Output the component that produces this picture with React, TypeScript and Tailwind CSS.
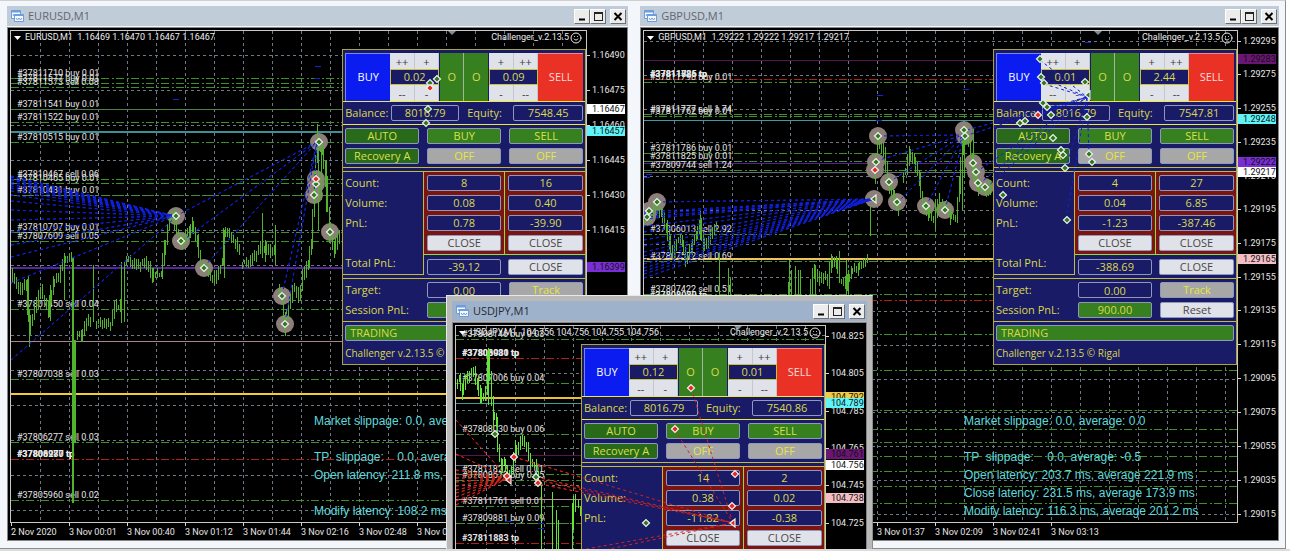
import React from 'react'
import { Smile } from 'lucide-react'

type Point = [number, number]

type Level = { y: number, color: string, width?: number }
type Order = { y: number, label?: string, tp?: boolean }
type Tag = { y: number, text: string, bg: string }
type Mark = { x: number, y: number, red?: boolean, halo?: boolean, tri?: boolean }
type Trend = { from: Point, to: Point }

type ChartData = {
  symbol: string
  quotes: string
  // desktop position of the plot's top left corner
  origin: Point
  grid: { x: number, y: number, stepY: number }
  barColor: string
  trendColor: string
  prices: Point[][]
  spikes: [number, number, number][]
  levels: Level[]
  orders: Order[]
  trends: Trend[]
  marks: Mark[]
  ticks: Point[]
  axis: { y: number, text: string }[]
  tags: Tag[]
  times: { x: number, text: string }[]
  notes: { x: number, y: number, text: string }[]
  shift: number
}

type PanelData = {
  buyLot: string
  sellLot: string
  balance: string
  equity: string
  count: [string, string]
  volume: [string, string]
  pnl: [string, string]
  total: string
  target: string
  session: string
}

const fan = (to: Point, x: number, ys: number[]): Trend[] => ys.map(y => ({ from: [x, y], to }))
const rays = (to: Point, from: Point[]): Trend[] => from.map(p => ({ from: p, to }))

const eurusd: ChartData = {
  symbol: 'EURUSD,M1',
  quotes: '1.16469 1.16470 1.16467 1.16467',
  origin: [11, 31],
  grid: { x: 40, y: 55, stepY: 35 },
  barColor: '#52b32d',
  trendColor: '#0f20dc',
  prices: [
    [[12, 268], [16, 282], [22, 290], [27, 284], [30, 328], [36, 308], [42, 290], [49, 310], [54, 285], [60, 276], [65, 259], [72, 258]],
    [[77, 331], [82, 336], [86, 326], [90, 320], [92, 321]],
    [[96, 321], [112, 325], [116, 305], [121, 306]],
    [[126, 256], [132, 262], [140, 266], [148, 262], [153, 275], [162, 274], [165, 252], [170, 222], [174, 214], [178, 232], [183, 243], [190, 232], [193, 226], [198, 240], [202, 262], [210, 275], [218, 277], [223, 262], [225, 232], [233, 236], [240, 246]],
    [[242, 262], [250, 262], [258, 254], [262, 246], [270, 250], [276, 252]],
    [[279, 284], [283, 298], [286, 322], [290, 306], [294, 288], [300, 296], [304, 275], [309, 265], [312, 246], [315, 195], [318, 142], [323, 152], [327, 180], [330, 225], [335, 250], [341, 234]],
  ],
  spikes: [[64, 255, 300], [72, 258, 503], [73, 258, 503], [74, 340, 443], [75, 340, 443], [93, 265, 322], [121, 262, 323], [124, 262, 322], [262, 213, 258], [265, 240, 262], [275, 225, 265], [224, 230, 278], [318, 142, 230], [321, 150, 200], [326, 160, 212], [50, 285, 321], [28, 276, 322]],
  levels: [
    { y: 109, color: '#666c78' },
    { y: 131, color: '#3c9092', width: 2 },
    { y: 267, color: '#55279a', width: 2 },
    { y: 341, color: '#a9868c' },
    { y: 393, color: '#f3cb35', width: 2 },
  ],
  orders: [
    { y: 78, label: '#37811710 buy 0.01' },
    { y: 83, label: '#37811577 buy 0.01' },
    { y: 87, label: '#37811573 sell 0.08' },
    { y: 109, label: '#37811541 buy 0.01' },
    { y: 122, label: '#37811522 buy 0.01' },
    { y: 142, label: '#37810515 buy 0.01' },
    { y: 179, label: '#37810467 sell 0.06' },
    { y: 183, label: '#37810465 buy 0.01' },
    { y: 195, label: '#37810431 buy 0.01' },
    { y: 232, label: '#37810707 buy 0.01' },
    { y: 241, label: '#37807609 sell 0.05' },
    { y: 309, label: '#37807450 sell 0.04' },
    { y: 379, label: '#37807038 sell 0.03' },
    { y: 442, label: '#37806277 sell 0.03' },
    { y: 459, label: '#37808980 tp', tp: true },
    { y: 459, label: '#37806277 tp', tp: true },
    { y: 500, label: '#37805960 sell 0.02' },
  ],
  trends: [
    ...fan([175, 216], 11, [176, 177, 179, 180, 182, 184, 186, 188, 191, 195, 201, 210, 220, 232, 245, 257, 283]),
    { from: [11, 360], to: [175, 218] },
    ...rays([317, 142], [[176, 216], [182, 241], [204, 267], [282, 295], [285, 323], [314, 195]]),
  ],
  marks: [
    { x: 176, y: 216, halo: true }, { x: 181, y: 241, halo: true }, { x: 204, y: 268, halo: true },
    { x: 282, y: 296, halo: true }, { x: 285, y: 324, halo: true }, { x: 319, y: 142, halo: true },
    { x: 316, y: 184, halo: true }, { x: 316, y: 179, halo: true, red: true }, { x: 314, y: 195, halo: true },
    { x: 330, y: 232, halo: true },
    { x: 437, y: 79 }, { x: 430, y: 83 }, { x: 430, y: 88, red: true }, { x: 428, y: 109 }, { x: 426, y: 123 },
  ],
  ticks: [[176, 99], [318, 66], [317, 78]],
  axis: [
    { y: 55, text: '1.16490' }, { y: 90, text: '1.16475' }, { y: 125, text: '1.16460' }, { y: 160, text: '1.16445' },
    { y: 195, text: '1.16430' }, { y: 230, text: '1.16415' },
  ],
  tags: [
    { y: 109, text: '1.16467', bg: '#ffffff' },
    { y: 131, text: '1.16457', bg: '#5ff5f8' },
    { y: 267, text: '1.16399', bg: '#7a2fd6' },
  ],
  times: [
    { x: 11, text: '2 Nov 2020' }, { x: 69, text: '3 Nov 00:01' }, { x: 127, text: '3 Nov 00:40' }, { x: 185, text: '3 Nov 01:12' },
    { x: 243, text: '3 Nov 01:44' }, { x: 301, text: '3 Nov 02:16' }, { x: 359, text: '3 Nov 02:48' }, { x: 417, text: '3 Nov 03:20' },
  ],
  notes: [
    { x: 314, y: 425, text: 'Market slippage: 0.0, average: 0.0' },
    { x: 314, y: 461, text: 'TP  slippage:    0.0, average: 0.0' },
    { x: 314, y: 479, text: 'Open latency: 211.8 ms, average' },
    { x: 314, y: 515, text: 'Modify latency: 108.2 ms, average' },
  ],
  shift: 452,
}

const gbpusd: ChartData = {
  symbol: 'GBPUSD,M1',
  quotes: '1.29222 1.29222 1.29217 1.29217',
  origin: [645, 31],
  grid: { x: 675, y: 41, stepY: 33.75 },
  barColor: '#52b32d',
  trendColor: '#0f20dc',
  prices: [
    [[646, 218], [652, 216], [658, 204], [663, 214], [668, 226], [671, 240], [675, 256], [679, 240], [684, 240], [688, 262], [693, 248], [698, 236], [702, 222], [705, 246], [711, 240], [718, 226]],
    [[811, 284], [816, 272], [822, 280], [826, 276], [830, 282], [833, 262], [838, 262], [842, 280], [848, 284], [853, 272], [860, 268], [869, 259]],
    [[876, 168], [880, 140], [886, 152], [890, 182], [895, 196], [900, 208]],
    [[904, 176], [908, 170], [911, 154], [916, 160], [921, 178], [925, 205], [930, 212], [936, 220], [941, 202], [947, 206], [952, 216], [958, 218], [961, 190], [964, 150], [967, 134], [971, 144], [975, 166], [980, 188], [987, 190], [993, 186]],
  ],
  spikes: [[720, 252, 297], [729, 268, 297], [731, 278, 297], [789, 282, 297], [790, 260, 297], [792, 270, 297], [796, 266, 297], [799, 270, 297], [801, 270, 297], [811, 280, 297], [813, 268, 297], [816, 265, 297], [840, 251, 282], [847, 260, 297], [849, 270, 297], [871, 206, 236], [876, 163, 184], [701, 211, 240], [936, 200, 230], [963, 145, 210], [965, 138, 178], [974, 128, 180]],
  levels: [
    { y: 60, color: '#571358' },
    { y: 120, color: '#3f9c9e' },
    { y: 163, color: '#55208f' },
    { y: 172, color: '#666c78' },
    { y: 258, color: '#f1c15a', width: 2 },
  ],
  orders: [
    { y: 79, label: '#37811786 tp', tp: true },
    { y: 79, label: '#37811825 tp', tp: true },
    { y: 82, label: '#37811798 buy 0.01' },
    { y: 114, label: '#37811777 sell 1.74' },
    { y: 116, label: '#37811762 buy 0.01' },
    { y: 153, label: '#37811786 buy 0.01' },
    { y: 161, label: '#37811825 buy 0.01' },
    { y: 170, label: '#37809744 sell 1.24' },
    { y: 234, label: '#37806013 sell 2.92' },
    { y: 261, label: '#37807572 sell 0.69' },
    { y: 294, label: '#37807422 sell 0.51' },
    { y: 300, label: '#37808980 tp', tp: true },
    { y: 334 }, { y: 370 }, { y: 410 }, { y: 429 }, { y: 442 }, { y: 456 }, { y: 471 }, { y: 486 }, { y: 503 },
  ],
  trends: [
    ...fan([875, 199], 645, [212, 214, 217, 219, 226, 232, 240, 246, 252, 256, 260, 264, 268, 271, 274, 278]),
    { from: [658, 202], to: [875, 199] },
    ...rays([965, 135], [[879, 136], [877, 161], [890, 182], [898, 203], [927, 206], [946, 210]]),
    ...rays([1088, 97], [[966, 136], [968, 130], [977, 172], [980, 184], [987, 188], [1041, 60], [1043, 78], [1045, 84], [1021, 123], [1039, 115], [1067, 219], [1067, 168], [1090, 155]]),
  ],
  marks: [
    { x: 658, y: 202, halo: true }, { x: 650, y: 211, halo: true }, { x: 648, y: 217, halo: true },
    { x: 879, y: 136, halo: true }, { x: 877, y: 162, halo: true }, { x: 876, y: 170, halo: true, red: true },
    { x: 890, y: 182, halo: true }, { x: 875, y: 199, halo: true, tri: true }, { x: 898, y: 202, halo: true },
    { x: 927, y: 206, halo: true }, { x: 946, y: 210, halo: true }, { x: 965, y: 130, halo: true }, { x: 966, y: 136, halo: true },
    { x: 974, y: 163, halo: true }, { x: 977, y: 172, halo: true }, { x: 979, y: 183, halo: true }, { x: 986, y: 187, halo: true },
    { x: 1041, y: 59 }, { x: 1042, y: 77 }, { x: 1045, y: 83 }, { x: 1086, y: 82 }, { x: 1089, y: 95, tri: true },
    { x: 1044, y: 103 }, { x: 1048, y: 107 }, { x: 1039, y: 115, red: true }, { x: 1052, y: 115 }, { x: 1088, y: 117 },
    { x: 1021, y: 123 }, { x: 1026, y: 121 }, { x: 1054, y: 138 }, { x: 1062, y: 150 }, { x: 1064, y: 155 },
    { x: 1066, y: 168 }, { x: 1090, y: 154 }, { x: 1093, y: 162 }, { x: 1004, y: 195 }, { x: 1068, y: 220 },
  ],
  ticks: [[881, 95], [967, 89], [880, 120], [650, 174], [648, 177], [1089, 42]],
  axis: [
    { y: 41, text: '1.29295' }, { y: 74, text: '1.29275' }, { y: 108, text: '1.29255' }, { y: 142, text: '1.29235' }, { y: 176, text: '1.29215' },
    { y: 209, text: '1.29195' }, { y: 243, text: '1.29175' }, { y: 277, text: '1.29155' }, { y: 310, text: '1.29135' },
    { y: 344, text: '1.29115' }, { y: 378, text: '1.29095' }, { y: 412, text: '1.29075' }, { y: 446, text: '1.29055' },
    { y: 480, text: '1.29035' }, { y: 514, text: '1.29015' },
  ],
  tags: [
    { y: 59, text: '1.29283', bg: '#6b1674' },
    { y: 119, text: '1.29248', bg: '#5ff5f8' },
    { y: 162, text: '1.29222', bg: '#7a2fd6' },
    { y: 172, text: '1.29217', bg: '#ffffff' },
    { y: 259, text: '1.29165', bg: '#f3bfc4' },
  ],
  times: [
    { x: 878, text: '3 Nov 01:37' }, { x: 936, text: '3 Nov 02:09' }, { x: 994, text: '3 Nov 02:41' }, { x: 1052, text: '3 Nov 03:13' },
  ],
  notes: [
    { x: 965, y: 425, text: 'Market slippage: 0.0, average: 0.0' },
    { x: 965, y: 461, text: 'TP  slippage:    0.0, average: -0.5' },
    { x: 965, y: 479, text: 'Open latency: 203.7 ms, average 221.9 ms' },
    { x: 965, y: 497, text: 'Close latency: 231.5 ms, average 173.9 ms' },
    { x: 965, y: 515, text: 'Modify latency: 116.3 ms, average 201.2 ms' },
  ],
  shift: 1099,
}

const usdjpy: ChartData = {
  symbol: 'USDJPY,M1',
  quotes: '104.756 104.756 104.755 104.756',
  origin: [456, 326],
  grid: { x: 486, y: 335, stepY: 37.5 },
  barColor: '#62e636',
  trendColor: '#d3221c',
  prices: [
    [[457, 382], [460, 378], [463, 390], [467, 380], [471, 374], [475, 372], [478, 382], [481, 394], [485, 398], [487, 392], [489, 352], [491, 378], [494, 412], [497, 420], [499, 450], [502, 466], [505, 462], [509, 474], [513, 470], [516, 452], [520, 446], [524, 440], [528, 448], [532, 460], [536, 466], [540, 484]],
  ],
  spikes: [[488, 348, 405], [541, 485, 549], [552, 492, 549], [556, 510, 549], [558, 520, 549], [572, 503, 549], [573, 496, 530], [575, 494, 512], [578, 500, 508], [580, 506, 516]],
  levels: [
    { y: 397, color: '#e9bf3a', width: 2 },
    { y: 403, color: '#3f9c9e' },
    { y: 455, color: '#571358' },
    { y: 465, color: '#666c78' },
    { y: 499, color: '#b58d92' },
  ],
  orders: [
    { y: 339, label: '#37808146 buy 0.03' },
    { y: 358, label: '#37808981 tp', tp: true },
    { y: 358, label: '#37806030 tp', tp: true },
    { y: 383, label: '#37807006 buy 0.04' },
    { y: 434, label: '#37808030 buy 0.06' },
    { y: 474, label: '#37811827 sell 0.01' },
    { y: 480, label: '#37808513 buy 0.05' },
    { y: 506, label: '#37811761 sell 0.01' },
    { y: 523, label: '#37809881 buy 0.09' },
    { y: 543, label: '#37811883 tp', tp: true },
  ],
  trends: [
    ...fan([508, 478], 456, [420, 454, 470, 474, 478, 482, 486, 490, 493, 497, 501, 505]),
    ...rays([733, 523], [[514, 457], [538, 480], [536, 477], [456, 572], [500, 572], [691, 388], [675, 430], [540, 484]]),
  ],
  marks: [
    { x: 495, y: 434 }, { x: 514, y: 457, red: true }, { x: 507, y: 476, red: true }, { x: 509, y: 480, red: true, tri: true },
    { x: 536, y: 477 }, { x: 538, y: 483, red: true },
    { x: 691, y: 388, red: true }, { x: 675, y: 429, red: true }, { x: 735, y: 474, red: true }, { x: 732, y: 506, red: true },
    { x: 733, y: 523, red: true, tri: true }, { x: 646, y: 523 },
  ],
  ticks: [[508, 521], [541, 523], [541, 528]],
  axis: [
    { y: 336, text: '104.825' }, { y: 373, text: '104.805' }, { y: 411, text: '104.785' }, { y: 448, text: '104.765' },
    { y: 485, text: '104.745' }, { y: 523, text: '104.725' },
  ],
  tags: [
    { y: 397, text: '104.792', bg: '#f0cd45' },
    { y: 403, text: '104.789', bg: '#5ff5f8' },
    { y: 454, text: '104.761', bg: '#6b1674' },
    { y: 465, text: '104.756', bg: '#ffffff' },
    { y: 498, text: '104.738', bg: '#f3bfc4' },
  ],
  times: [],
  notes: [],
  shift: 738,
}

const eurPanel: PanelData = {
  buyLot: '0.02', sellLot: '0.09', balance: '8016.79', equity: '7548.45',
  count: ['8', '16'], volume: ['0.08', '0.40'], pnl: ['0.78', '-39.90'],
  total: '-39.12', target: '0.00', session: '900.00',
}
const gbpPanel: PanelData = {
  buyLot: '0.01', sellLot: '2.44', balance: '8016.79', equity: '7547.81',
  count: ['4', '27'], volume: ['0.04', '6.85'], pnl: ['-1.23', '-387.46'],
  total: '-388.69', target: '0.00', session: '900.00',
}
const jpyPanel: PanelData = {
  buyLot: '0.12', sellLot: '0.01', balance: '8016.79', equity: '7540.86',
  count: ['14', '2'], volume: ['0.38', '0.02'], pnl: ['-11.82', '-0.38'],
  total: '-12.20', target: '0.00', session: '900.00',
}

// turns a coarse price path into minute bars
function toBars(path: Point[]) {
  let seed = 7
  const rand = () => {
    seed = (seed * 16807) % 2147483647
    return seed / 2147483647
  }
  let d = ''
  for (let i = 0; i < path.length - 1; i++) {
    const [x0, y0] = path[i]
    const [x1, y1] = path[i + 1]
    for (let x = x0; x < x1; x += 2) {
      const a = y0 + ((y1 - y0) * (x - x0)) / (x1 - x0)
      const b = y0 + ((y1 - y0) * (x + 2 - x0)) / (x1 - x0)
      const top = Math.round(Math.min(a, b) - rand() * 7)
      const bottom = Math.round(Math.max(a, b) + 1 + rand() * 7)
      d += `M${x + 0.5} ${top}V${bottom}`
    }
  }
  return d
}

const Marker = ({ mark }: { mark: Mark }) => (
  <path
    transform={`translate(${mark.x} ${mark.y})`}
    d={mark.tri ? 'M-3 0L2 -4V4Z' : 'M-3.500 0L0 -3.500L3.500 0L0 3.500Z'}
    fill={mark.red ? '#e8281f' : '#2d7a1d'}
    stroke="#f1f1f1"
    strokeWidth="1.2"
  />
)

const TrendLines = ({ data }: { data: ChartData }) => (
  <g stroke={data.trendColor} strokeDasharray="3 3" fill="none">
    {data.trends.map((t, i) => (
      <path key={i} d={`M${t.from[0]} ${t.from[1]}L${t.to[0]} ${t.to[1]}`} />
    ))}
  </g>
)

const Plot = ({ data }: { data: ChartData }) => {
  const [ox, oy] = data.origin
  const columns = Array.from({ length: 22 }, (_, i) => data.grid.x + i * 29)
  const rows = Array.from({ length: 16 }, (_, i) => Math.round(data.grid.y + i * data.grid.stepY))

  return (
    <svg className="absolute inset-0 h-full w-full" aria-hidden="true">
      <g transform={`translate(${-ox} ${-oy})`}>
        <g stroke="#6d7986" strokeDasharray="3 3">
          {columns.map(x => <path key={x} d={`M${x + 0.5} ${oy}V${oy + 600}`} />)}
          {rows.map(y => <path key={y} d={`M${ox} ${y + 0.5}H${ox + 700}`} />)}
        </g>
        {data.levels.map(l => (
          <rect key={l.y} x={ox} y={l.y} width="700" height={l.width ?? 1} fill={l.color} />
        ))}
        {data.orders.map((o, i) => (
          <path key={i} d={`M${ox} ${o.y + 0.5}h700`} stroke={o.tp ? '#b3201a' : '#40902a'} strokeDasharray="8 3 2 2" />
        ))}
        <g fill="#e6e6e6">
          {data.orders.map((o, i) => (
            <text key={i} x={ox + 6} y={o.y - 2} fontWeight={o.tp ? 700 : 400}>{o.label}</text>
          ))}
        </g>
        <TrendLines data={data} />
        {data.marks.filter(m => m.halo).map((m, i) => (
          <circle key={i} cx={m.x} cy={m.y} r="9" fill="#8c7f79" />
        ))}
        <g stroke={data.barColor} fill="none">
          {data.prices.map((p, i) => <path key={i} d={toBars(p)} />)}
          {data.spikes.map(([x, top, bottom], i) => <path key={i} d={`M${x + 0.5} ${top}V${bottom}`} />)}
        </g>
        {data.ticks.map(([x, y], i) => (
          <rect key={i} x={x - 3} y={y} width="6" height="1" fill="#1522d8" />
        ))}
        <path d={`M${data.shift - 4} ${oy}h8l-4 4z`} fill="#7f8c9a" />
        <g className="[font-family:'Liberation_Sans',Arial,sans-serif]" fontSize="12" fill="#5fd9dc">
          {data.notes.map(n => (
            <text key={n.y} x={n.x} y={n.y} className="whitespace-pre">{n.text}</text>
          ))}
        </g>
      </g>
    </svg>
  )
}

// trades stay visible above the trading panel
const TradeLayer = ({ data }: { data: ChartData }) => (
  <svg className="pointer-events-none absolute inset-0 h-full w-full" aria-hidden="true">
    <g transform={`translate(${-data.origin[0]} ${-data.origin[1]})`}>
      <TrendLines data={data} />
      {data.marks.map((m, i) => <Marker key={i} mark={m} />)}
    </g>
  </svg>
)

const PriceAxis = ({ data }: { data: ChartData }) => (
  <svg className="h-full w-10 shrink-0" fill="#e6e6e6">
    <g transform={`translate(0 ${1 - data.origin[1]})`}>
      {data.axis.map(a => (
        <g key={a.text}>
          <path d={`M0 ${a.y + 0.5}h3`} stroke="#d8d8d8" />
          <text x="5" y={a.y + 3}>{a.text}</text>
        </g>
      ))}
      {data.tags.map(t => (
        <g key={t.text}>
          <rect x="0" y={t.y - 5} width="38" height="10" fill={t.bg} />
          <text x="5" y={t.y + 3} fill="#111111">{t.text}</text>
        </g>
      ))}
    </g>
  </svg>
)

const TimeAxis = ({ data }: { data: ChartData }) => (
  <svg className="h-[17px] w-full shrink-0" fill="#e6e6e6">
    <g transform={`translate(${1 - data.origin[0]} 0)`}>
      {data.times.map(t => (
        <g key={t.text}>
          <path d={`M${t.x + 0.5} 0v3`} stroke="#d8d8d8" />
          <text x={t.x} y="12">{t.text}</text>
        </g>
      ))}
    </g>
  </svg>
)

const StepButton = ({ children }: { children: React.ReactNode }) => (
  <button type="button" className="h-4 border-r border-[#c3c7d2] bg-[#dfe2e8] text-[#3c3c44] leading-none">{children}</button>
)

const LotBox = ({ name, value, up }: { name: string, value: string, up: [string, string] }) => (
  <div className="grid w-[49px] grid-cols-2">
    <StepButton>{up[0]}</StepButton>
    <StepButton>{up[1]}</StepButton>
    <input aria-label={name} defaultValue={value} className="col-span-2 h-4 w-full min-w-0 border border-[#c9c33c] bg-[#1a1b66] text-center text-[#d9d94a]" />
    <StepButton>{up[0].replace(/\+/g, '-')}</StepButton>
    <StepButton>{up[1].replace(/\+/g, '-')}</StepButton>
  </div>
)

const boxClass = 'block h-4 w-full min-w-0 rounded-[2px] border border-[#8f97bd] text-center leading-[14px] '
const Value = ({ children, className = '' }: { children: React.ReactNode, className?: string }) => (
  <output className={boxClass + 'text-[#d9d94a] ' + className}>{children}</output>
)

const PanelButton = ({ tone, children }: { tone: 'dark' | 'green' | 'off' | 'light', children: React.ReactNode }) => {
  const tones = {
    dark: 'bg-[#28691a] text-[#d9e04a]',
    green: 'bg-[#36801f] text-[#d9e04a]',
    off: 'bg-[#a7a7a7] text-[#e6e63c]',
    light: 'bg-[#dfe2e8] text-[#4a4648]',
  }
  return <button type="button" className={boxClass + tones[tone]}>{children}</button>
}

const TradePanel = ({ data }: { data: PanelData }) => (
  <section className="absolute right-0 top-[18px] w-[244px] border border-[#aba535] bg-[#1a1b66] text-[11px] text-[#d9d94a] [font-family:'Open_Sans','Noto_Sans',sans-serif]">
    {/* Order buttons */}
    <div className="flex h-[52px] border-b border-[#f0e83c] px-[2px] pt-[3px]">
      <button type="button" className="w-[45px] border-l border-t border-[#7c86e8] bg-[#0a1cf0] text-white">BUY</button>
      <LotBox name="Buy lot" value={data.buyLot} up={['++', '+']} />
      <button type="button" className="ml-px w-6 border-r border-[#9fb79a] bg-[#36801f]">O</button>
      <button type="button" className="mr-px w-6 bg-[#36801f]">O</button>
      <LotBox name="Sell lot" value={data.sellLot} up={['+', '++']} />
      <button type="button" className="flex-1 border-t border-[#f08a84] bg-[#e93225] text-[#f7dcd8]">SELL</button>
    </div>

    {/* Account */}
    <div className="flex h-[23px] items-center border-b border-[#f0e83c] px-[2px]">
      <span className="w-[46px]">Balance:</span>
      <Value className="max-w-[68px]">{data.balance}</Value>
      <span className="w-[54px] shrink-0 pl-2">Equity:</span>
      <Value className="max-w-[70px]">{data.equity}</Value>
    </div>

    {/* Modes */}
    <div className="grid grid-cols-3 gap-x-2 gap-y-1 border-b border-[#c3bc35] px-[2px] py-[3px]">
      <PanelButton tone="dark">AUTO</PanelButton>
      <PanelButton tone="green">BUY</PanelButton>
      <PanelButton tone="green">SELL</PanelButton>
      <PanelButton tone="dark">Recovery&nbsp;A</PanelButton>
      <PanelButton tone="off">OFF</PanelButton>
      <PanelButton tone="off">OFF</PanelButton>
    </div>

    {/* Positions */}
    <div className="mt-[3px] grid grid-cols-[81px_80px_81px] border-t border-[#c3bc35]">
      <div className="row-span-2 flex h-[103px] flex-col gap-1 border-b border-r border-[#c3bc35] px-[2px] pt-[3px] leading-4">
        <span>Count:</span>
        <span>Volume:</span>
        <span>PnL:</span>
        <span className="mt-auto mb-[3px]">Total PnL:</span>
      </div>
      <div className="grid gap-1 border-b border-[#8fdc3c] bg-[#7c1410] px-[3px] pt-[3px] pb-[2px]">
        <Value className="bg-[#1a1b66]">{data.count[0]}</Value>
        <Value className="bg-[#1a1b66]">{data.volume[0]}</Value>
        <Value className="bg-[#1a1b66]">{data.pnl[0]}</Value>
        <PanelButton tone="light">CLOSE</PanelButton>
      </div>
      <div className="grid gap-1 border-b border-l border-[#8fdc3c] bg-[#7c1410] pl-[3px] pr-[2px] pt-[3px] pb-[2px]">
        <Value className="bg-[#1a1b66]">{data.count[1]}</Value>
        <Value className="bg-[#1a1b66]">{data.volume[1]}</Value>
        <Value className="bg-[#1a1b66]">{data.pnl[1]}</Value>
        <PanelButton tone="light">CLOSE</PanelButton>
      </div>
      <div className="px-[3px] pt-1"><Value>{data.total}</Value></div>
      <div className="pl-1 pr-[2px] pt-1"><PanelButton tone="light">CLOSE</PanelButton></div>
    </div>

    {/* Session */}
    <div className="mt-[3px] grid grid-cols-3 gap-x-2 gap-y-1 border-y border-[#c3bc35] px-[2px] py-[3px] leading-4">
      <span>Target:</span>
      <input aria-label="Target" defaultValue={data.target} className={boxClass + 'bg-[#1a1b66] text-[#d9d94a]'} />
      <PanelButton tone="off">Track</PanelButton>
      <span className="whitespace-nowrap">Session PnL:</span>
      <Value className="bg-[#36801f]">{data.session}</Value>
      <PanelButton tone="light">Reset</PanelButton>
    </div>
    <div className="px-[2px] py-[3px]">
      <div className="h-4 rounded-[2px] border border-[#8f97bd] bg-[#36801f] px-1 leading-[14px]">TRADING</div>
      <p className="mt-1 text-[10px] leading-4">Challenger v.2.13.5 © Rigal</p>
    </div>
  </section>
)

const ChartIcon = () => (
  <svg className="h-[14px] w-[14px] shrink-0" viewBox="0 0 14 14" fill="#f4f8fd" stroke="#6d9ddd" aria-hidden="true">
    <path d="M1.500 1.500h9v8h-9z" />
    <path d="M1.500 2.500h9" strokeWidth="2" />
    <path d="M3 7l1-2 2 2" fill="none" />
    <path d="M4.500 5.500h9v7h-9z" />
    <path d="M4.500 6h9" strokeWidth="2" />
    <path d="M6 9l1.500 2L9 9l1.500 2L12 9" fill="none" />
  </svg>
)

const captionClass = 'h-[15px] w-4 border border-b-[#6f6f6f] border-r-[#6f6f6f] border-l-white border-t-white bg-[#ececec] '

const ChartWindow = ({ data, panel, active = false, className }: { data: ChartData, panel: PanelData, active?: boolean, className: string }) => (
  <article className={'flex flex-col ' + className}>
    <header className={'flex h-5 shrink-0 items-center gap-1 pl-[3px] pr-[2px] ' + (active ? 'bg-[#9fb2cc] text-[#25292f]' : 'bg-[#c1ccd9] text-[#62666b]')}>
      <ChartIcon />
      <h2 className="flex-1 text-[11px] leading-5">{data.symbol}</h2>
      <div className="flex">
        <button type="button" aria-label="Minimize" className={captionClass}>
          <svg viewBox="0 0 14 13" className="block h-[13px] w-[14px]"><path d="M4 9.500h6" stroke="#000" strokeWidth="2" /></svg>
        </button>
        <button type="button" aria-label="Maximize" className={captionClass}>
          <svg viewBox="0 0 14 13" className="block h-[13px] w-[14px]"><path d="M3 2.500h9M3.500 2v9M11.500 2v9M3 10.500h9M3 3.500h9" stroke="#222" /></svg>
        </button>
        <button type="button" aria-label="Close" className={captionClass + 'ml-1'}>
          <svg viewBox="0 0 14 13" className="block h-[13px] w-[14px]"><path d="M3.500 3l7 7M10.500 3l-7 7" stroke="#000" strokeWidth="2" /></svg>
        </button>
      </div>
    </header>
    <div className="mt-px flex min-h-0 flex-1 flex-col border border-[#858585] bg-black pl-[2px] pt-[2px] text-[9px] [font-family:Roboto,'Noto_Sans',sans-serif]">
      <div className="flex min-h-0 flex-1">
        <div className="relative min-w-0 flex-1 overflow-hidden border border-[#c9c9c9]">
          <Plot data={data} />
          <div className="relative flex h-[14px] items-center text-[#ececec]">
            <svg className="ml-[3px] mr-1 h-1 w-[7px]" viewBox="0 0 7 4" fill="#fff" aria-hidden="true"><path d="M0 0h7L3.500 4z" /></svg>
            <span className="whitespace-pre">{data.symbol + '  ' + data.quotes}</span>
            <span className="ml-auto">Challenger_v.2.13.5</span>
            <Smile className="mr-1 ml-px size-3" strokeWidth={2} />
          </div>
          <TradePanel data={panel} />
          <TradeLayer data={data} />
        </div>
        <PriceAxis data={data} />
      </div>
      <TimeAxis data={data} />
    </div>
  </article>
)

const App = () => {
  return (
    <div className="flex min-h-screen flex-col bg-[#dcdcdc] [font-family:'Open_Sans','Noto_Sans',sans-serif]">
      <main className="relative flex min-h-[500px] flex-1 overflow-hidden bg-white pr-1">
        <ChartWindow data={eurusd} panel={eurPanel} className="min-w-0 flex-[634] border-t border-b border-t-[#cfcfcf] border-b-[#8c8c8c] bg-[#f3f6fb] pt-[5px] pb-[7px] pl-[7px] pr-[5px]" />
        <ChartWindow data={gbpusd} panel={gbpPanel} className="min-w-0 flex-[652] border-t border-b border-r border-t-[#cfcfcf] border-b-[#8c8c8c] border-r-[#8c8c8c] bg-[#f3f6fb] pt-[5px] pb-[7px] pl-[7px] pr-[6px]" />
        {/* floating window */}
        <ChartWindow active data={usdjpy} panel={jpyPanel} className="absolute left-[446px] top-[295px] h-[360px] w-[427px] border border-t-[#e8e8e8] border-l-[#e8e8e8] border-r-[#8c8c8c] border-b-[#8c8c8c] bg-[#b9b9b9] px-[5px] pt-[5px]" />
      </main>
      <footer className="h-[2px]" />
    </div>
  )
}

export default App
